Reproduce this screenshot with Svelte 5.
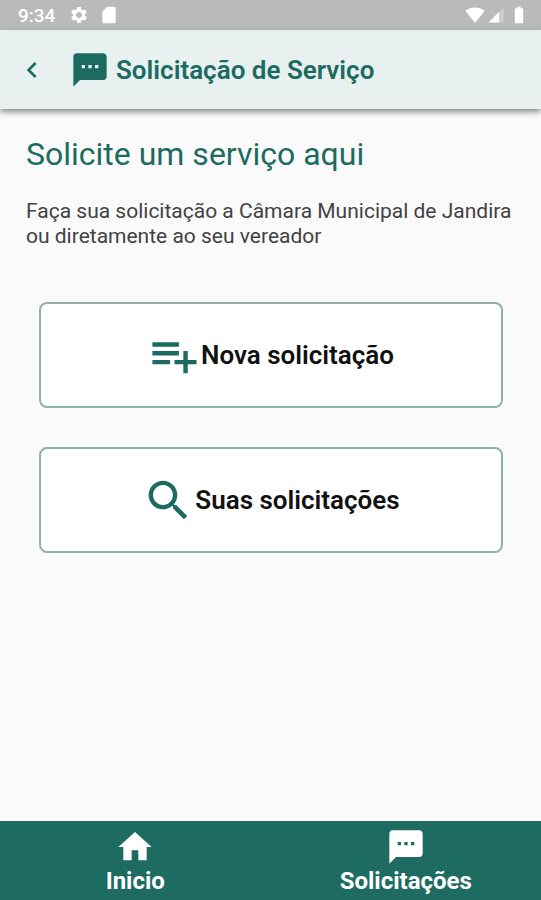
<script>
  const title = "Solicitação de Serviço";

  const actions = [
    { label: "Nova solicitação", icon: "add" },
    { label: "Suas solicitações", icon: "search" },
  ];

  const tabs = [
    { label: "Inicio", icon: "home", href: "#inicio" },
    { label: "Solicitações", icon: "sms", href: "#solicitacoes" },
  ];

  // 24x24 icon paths
  const icons = {
    add: "M14 10H2v2h12v-2zm0-4H2v2h12V6zm4 8v-4h-2v4h-4v2h4v4h2v-4h4v-2h-4zM2 16h8v-2H2v2z",
    search:
      "M15.5 14h-.79l-.28-.27C15.41 12.59 16 11.11 16 9.5 16 5.91 13.09 3 9.5 3S3 5.91 3 9.5 5.91 16 9.5 16c1.61 0 3.09-.59 4.23-1.57l.27.28v.79l5 4.99L20.49 19l-4.99-5zm-6 0C7.01 14 5 11.99 5 9.5S7.01 5 9.5 5 14 7.01 14 9.5 11.99 14 9.5 14z",
    home: "M10 20v-6h4v6h5v-8h3L12 3 2 12h3v8z",
    sms: "M20 2H4c-1.1 0-1.99.9-1.99 2L2 22l4-4h14c1.1 0 2-.9 2-2V4c0-1.1-.9-2-2-2zM9 11H7V9h2v2zm4 0h-2V9h2v2zm4 0h-2V9h2v2z",
    back: "M15.41 7.41L14 6l-6 6 6 6 1.41-1.41L10.83 12z",
    gear: "M19.14 12.94c.04-.3.06-.61.06-.94 0-.32-.02-.64-.07-.94l2.03-1.58c.18-.14.23-.41.12-.61l-1.92-3.32c-.12-.22-.37-.29-.59-.22l-2.39.96c-.5-.38-1.03-.7-1.62-.94l-.36-2.54c-.04-.24-.24-.41-.48-.41h-3.84c-.24 0-.43.17-.47.41l-.36 2.54c-.59.24-1.13.57-1.62.94l-2.39-.96c-.22-.08-.47 0-.59.22L2.74 8.87c-.12.21-.08.47.12.61l2.03 1.58c-.05.3-.09.63-.09.94s.02.64.07.94l-2.03 1.58c-.18.14-.23.41-.12.61l1.92 3.32c.12.22.37.29.59.22l2.39-.96c.5.38 1.03.7 1.62.94l.36 2.54c.05.24.24.41.48.41h3.84c.24 0 .44-.17.47-.41l.36-2.54c.59-.24 1.13-.56 1.62-.94l2.39.96c.22.08.47 0 .59-.22l1.92-3.32c.12-.22.07-.47-.12-.61l-2.01-1.58zM12 15.6c-1.98 0-3.6-1.62-3.6-3.6s1.62-3.6 3.6-3.6 3.6 1.62 3.6 3.6-1.62 3.6-3.6 3.6z",
    card: "M18 2h-8L4.02 8 4 20c0 1.1.9 2 2 2h12c1.1 0 2-.9 2-2V4c0-1.1-.9-2-2-2z",
    wifi: "M12 21.5L23.6 7c-.4-.3-4.9-4-11.6-4S.8 6.7.4 7L12 21.5z",
    battery: "M15.67 4H14V2h-4v2H8.33C7.6 4 7 4.6 7 5.33v15.33C7 21.4 7.6 22 8.33 22h7.33c.74 0 1.34-.6 1.34-1.33V5.33C17 4.6 16.4 4 15.67 4z",
  };
</script>

{#snippet icon(name)}
  <svg class="icon" viewBox="0 0 24 24" aria-hidden="true">
    <path d={icons[name]} />
  </svg>
{/snippet}

<div class="screen">
  <div class="status">
    <span class="clock">9:34</span>
    {@render icon("gear")}
    {@render icon("card")}
    <span class="spacer"></span>
    {@render icon("wifi")}
    <svg class="icon signal" viewBox="0 0 24 24" aria-hidden="true">
      <path d="M2 22h20V2z" opacity="0.3" />
      <path d="M2 22h14V8z" />
    </svg>
    {@render icon("battery")}
  </div>

  <header class="app-bar">
    <button class="back" aria-label="Voltar">{@render icon("back")}</button>
    {@render icon("sms")}
    <h1>{title}</h1>
  </header>

  <main>
    <h2>Solicite um serviço aqui</h2>
    <p>Faça sua solicitação a Câmara Municipal de Jandira ou diretamente ao seu vereador</p>

    <div class="actions">
      {#each actions as action}
        <button class="action">
          {@render icon(action.icon)}
          <span>{action.label}</span>
        </button>
      {/each}
    </div>
  </main>

  <nav>
    {#each tabs as tab}
      <a href={tab.href}>
        {@render icon(tab.icon)}
        <span>{tab.label}</span>
      </a>
    {/each}
  </nav>
</div>

<style>
  :global(body) {
    margin: 0;
    background: #fafafa;
  }

  .screen {
    display: flex;
    flex-direction: column;
    min-height: 100vh;
    font-family: Roboto, "Liberation Sans", sans-serif;
    color: #424242;
  }

  .icon {
    display: block;
    flex: none;
    width: 40px;
    height: 40px;
    fill: currentColor;
  }

  .status {
    display: flex;
    align-items: center;
    height: 30px;
    padding: 0 12px 0 18px;
    background: #bababa;
    color: #fff;
  }

  .status .icon {
    width: 20px;
    height: 20px;
    margin-right: 10px;
  }

  .status .signal {
    width: 18px;
    height: 18px;
    margin: 0 4px 0 -8px;
  }

  .status .icon:last-child {
    margin-right: 0;
  }

  .clock {
    margin-right: 14px;
    font-size: 19px;
    font-weight: 500;
  }

  .spacer {
    flex: 1;
  }

  .app-bar {
    display: flex;
    align-items: center;
    height: 79px;
    padding-left: 16px;
    background: #e8f0f0;
    color: #1c6b60;
    box-shadow: 0 3px 6px rgba(0, 0, 0, 0.45);
  }

  .back {
    margin-right: 22px;
    padding: 0;
    border: none;
    background: none;
    color: inherit;
    cursor: pointer;
  }

  .back .icon {
    width: 32px;
    height: 32px;
  }

  h1 {
    margin: 0 0 0 6px;
    font-size: 26px;
    font-weight: 600;
  }

  main {
    flex: 1;
    padding: 25px 26px 24px;
  }

  h2 {
    margin: 0;
    font-size: 32px;
    font-weight: 400;
    line-height: 40px;
    color: #1c6b60;
  }

  p {
    margin: 25px 0 0;
    font-size: 21px;
    line-height: 25px;
  }

  .actions {
    display: flex;
    flex-direction: column;
    gap: 39px;
    margin: 53px 12px 0 13px;
  }

  .action {
    display: flex;
    align-items: center;
    justify-content: center;
    height: 106px;
    padding: 0;
    border: 2px solid #91b1aa;
    border-radius: 8px;
    background: #fff;
    color: #111;
    font-family: inherit;
    font-size: 26px;
    font-weight: 600;
    cursor: pointer;
  }

  .action .icon {
    width: 53px;
    height: 53px;
    color: #1c6b60;
  }

  nav {
    display: flex;
    height: 79px;
    background: #1d6b61;
  }

  nav a {
    flex: 1;
    display: flex;
    flex-direction: column;
    align-items: center;
    padding-top: 6px;
    color: #fff;
    font-size: 24px;
    font-weight: 700;
    line-height: 28px;
    text-decoration: none;
  }
</style>
